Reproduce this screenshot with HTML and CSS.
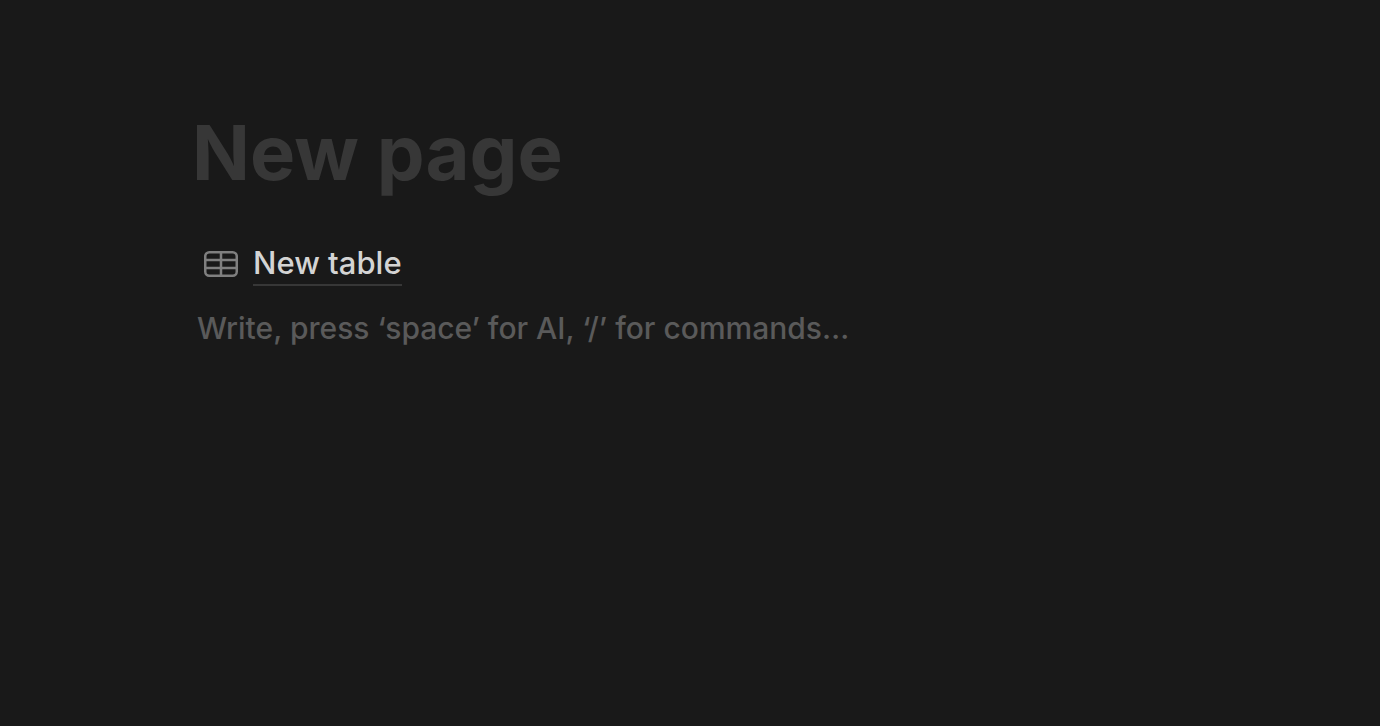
FILE: index.html
```html
<!DOCTYPE html>
<html lang="en">
<head>
    <meta charset="UTF-8">
    <meta name="viewport" content="width=device-width,initial-scale=1.0">
    <title>New page</title>
    <link rel="stylesheet" href="styles.css">
</head>
<body>
<main class="page">
    <input class="title" type="text" placeholder="New page" aria-label="Page title">
    <a class="table-link" href="#">
        <svg class="icon" viewBox="0 0 34 26" aria-hidden="true">
            <rect x="1.25" y="1.25" width="31.5" height="23.5" rx="4"/>
            <path d="M2 9h30M2 17h30M17 2v22"/>
        </svg>
        <span class="name">New table</span>
    </a>
    <input class="editor" type="text" placeholder="Write, press ‘space’ for AI, ‘/’ for commands…" aria-label="Page content">
</main>
</body>
</html>
```
FILE: styles.css
```css
* {
    box-sizing: border-box;
}

body {
    margin: 0;
    min-height: 100vh;
    background: #191919;
    color: #d4d4d4;
    font-family: Inter, sans-serif;
}

.page {
    display: flex;
    flex-direction: column;
    align-items: flex-start;
    padding: 104px 192px 0;
}

.title,
.editor {
    width: 100%;
    padding: 0;
    border: none;
    outline: none;
    background: none;
    color: #d4d4d4;
    font-family: inherit;
}

.title {
    height: 96px;
    font-size: 76px;
    font-weight: 700;
}

.title::placeholder {
    color: #373737;
}

.table-link {
    display: flex;
    align-items: center;
    gap: 15px;
    margin-top: 42px;
    padding-left: 12px;
    color: inherit;
    text-decoration: none;
}

.icon {
    width: 34px;
    height: 26px;
    fill: none;
    stroke: #7f7f7f;
    stroke-width: 2.5;
}

.name {
    border-bottom: 2px solid #373737;
    font-size: 31px;
    font-weight: 500;
    line-height: 42px;
}

.editor {
    height: 48px;
    margin-top: 18px;
    padding-left: 5px;
    font-size: 30px;
    font-weight: 500;
}

.editor::placeholder {
    color: #5a5a5a;
}
```
